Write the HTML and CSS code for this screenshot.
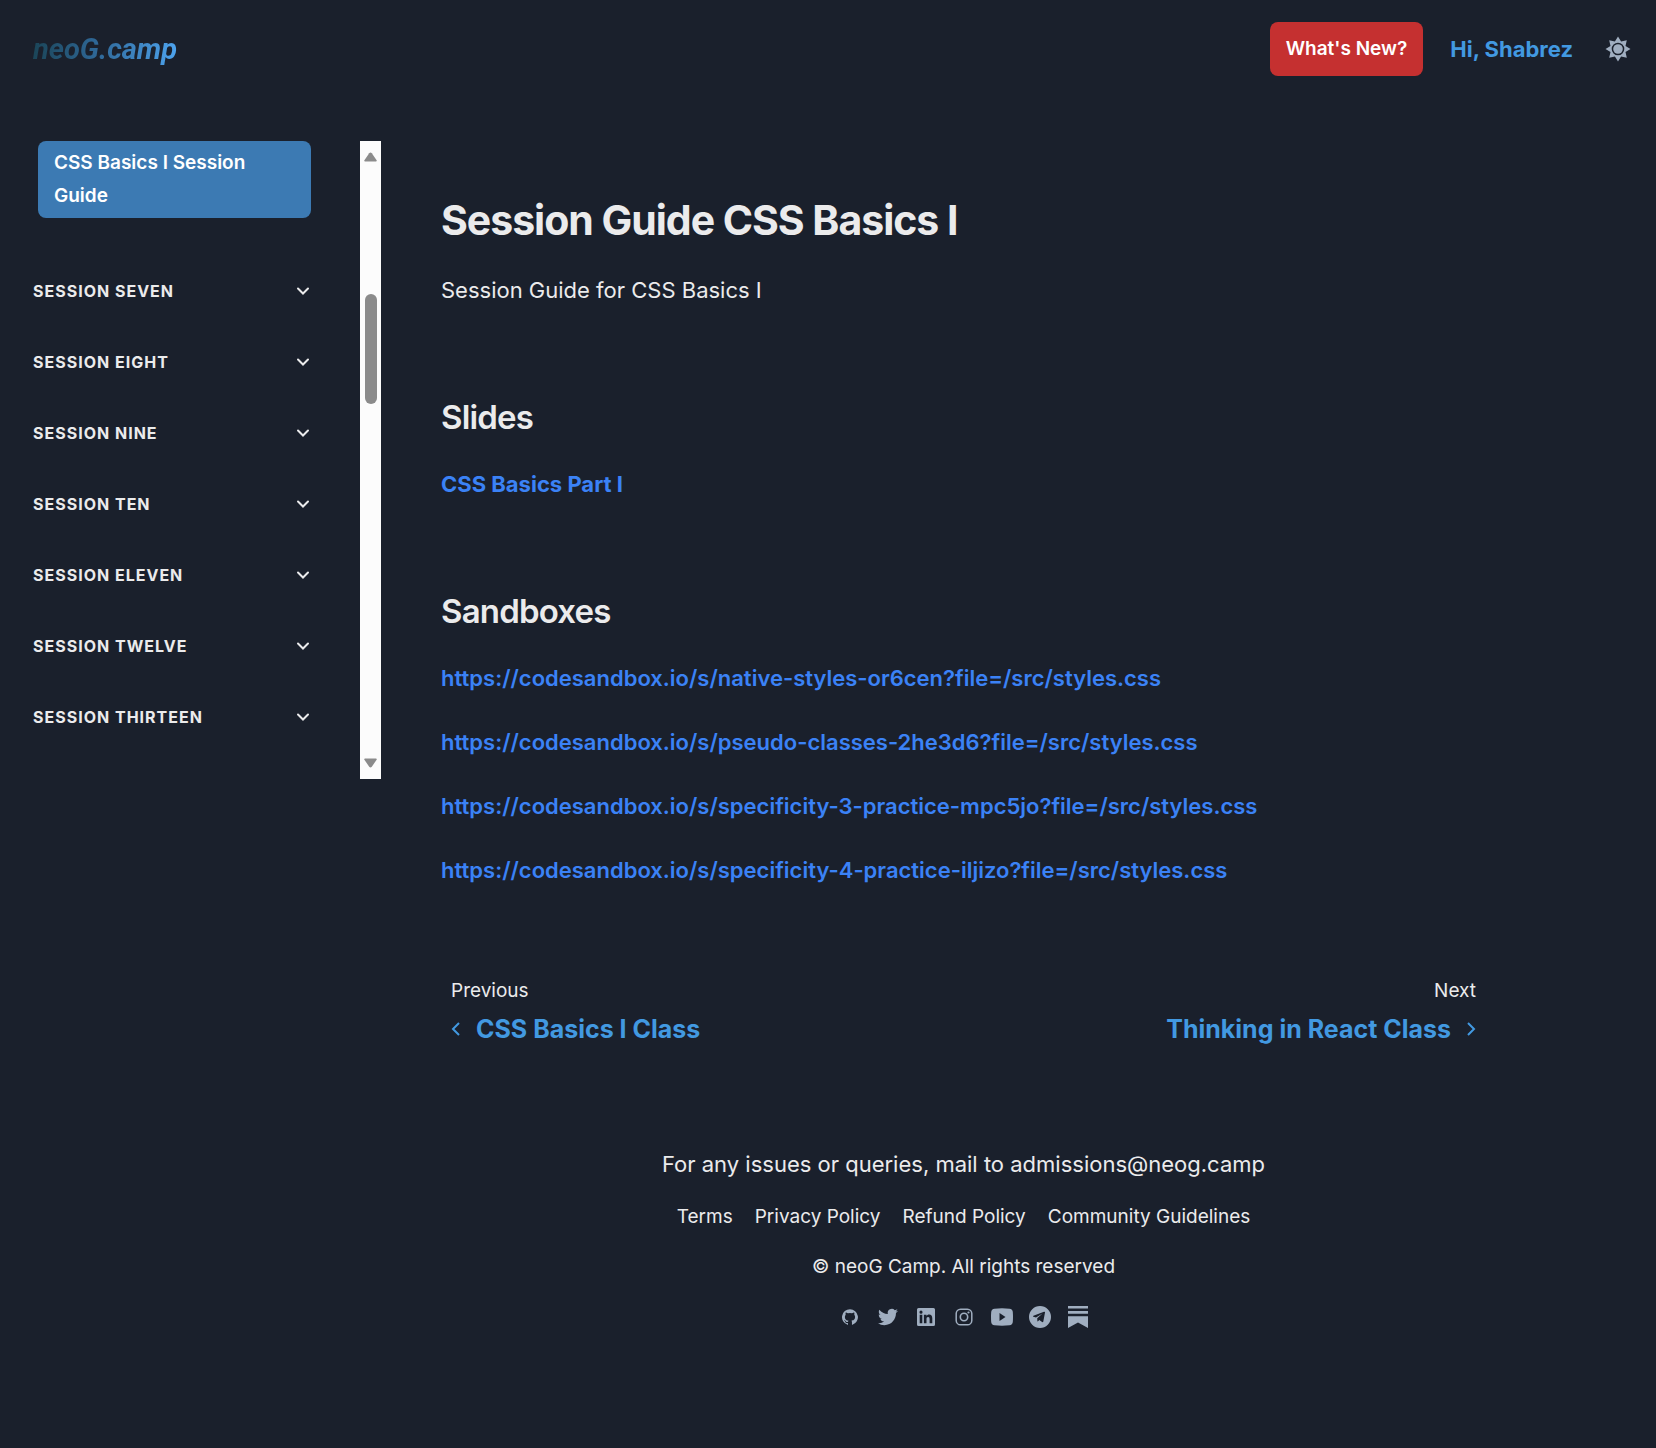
FILE: index.html
```html
<!DOCTYPE html>
<html lang="en">
<head>
<meta charset="utf-8">
<meta name="viewport" content="width=device-width, initial-scale=1">
<title>Session Guide CSS Basics I | neoG Camp</title>
<link rel="stylesheet" href="styles.css">
</head>
<body>
<header class="topbar">
  <a class="logo" href="#">neoG.camp</a>
  <div class="topbar-actions">
    <button class="whats-new" type="button">What's New?</button>
    <a class="greeting" href="#">Hi, Shabrez</a>
    <button class="theme-toggle" type="button" aria-label="Toggle theme">
      <svg viewBox="0 0 26 26" width="26" height="26" aria-hidden="true">
        <path fill-rule="evenodd" d="M13 .5l3.100 5 5.700-1.300-1.300 5.700 5 3.100-5 3.100 1.300 5.700-5.700-1.300-3.100 5-3.100-5-5.700 1.300 1.300-5.700L.5 13l5-3.100-1.300-5.700 5.700 1.300zM13 6.700a6.300 6.300 0 1 0 0 12.600 6.300 6.300 0 0 0 0-12.600z"/>
        <circle cx="13" cy="13" r="4.800"/>
      </svg>
    </button>
  </div>
</header>

<div class="layout">
  <div class="sidebar">
    <nav class="sessions" aria-label="Sessions">
      <a class="active-page" href="#" aria-current="page">CSS Basics I Session Guide</a>
      <ul class="session-list">
        <li><button class="session" type="button">Session Seven<svg class="chevron" viewBox="0 0 16 16" aria-hidden="true"><path d="M3 5.500l5 5 5-5"/></svg></button></li>
        <li><button class="session" type="button">Session Eight<svg class="chevron" viewBox="0 0 16 16" aria-hidden="true"><path d="M3 5.500l5 5 5-5"/></svg></button></li>
        <li><button class="session" type="button">Session Nine<svg class="chevron" viewBox="0 0 16 16" aria-hidden="true"><path d="M3 5.500l5 5 5-5"/></svg></button></li>
        <li><button class="session" type="button">Session Ten<svg class="chevron" viewBox="0 0 16 16" aria-hidden="true"><path d="M3 5.500l5 5 5-5"/></svg></button></li>
        <li><button class="session" type="button">Session Eleven<svg class="chevron" viewBox="0 0 16 16" aria-hidden="true"><path d="M3 5.500l5 5 5-5"/></svg></button></li>
        <li><button class="session" type="button">Session Twelve<svg class="chevron" viewBox="0 0 16 16" aria-hidden="true"><path d="M3 5.500l5 5 5-5"/></svg></button></li>
        <li><button class="session" type="button">Session Thirteen<svg class="chevron" viewBox="0 0 16 16" aria-hidden="true"><path d="M3 5.500l5 5 5-5"/></svg></button></li>
      </ul>
    </nav>
    <div class="scrollbar" aria-hidden="true">
      <svg viewBox="0 0 13 10" width="13" height="10"><path d="M5.200 1.200q1.300-1.600 2.600 0l4.800 7q.6 1.300-.8 1.300H1.200q-1.400 0-.8-1.300z"/></svg>
      <div class="track"><div class="thumb"></div></div>
      <svg viewBox="0 0 13 10" width="13" height="10"><path d="M5.200 8.800q1.300 1.600 2.600 0l4.800-7q.6-1.300-.8-1.300H1.200q-1.400 0-.8 1.300z"/></svg>
    </div>
  </div>

  <div class="content">
    <main>
      <h1>Session Guide CSS Basics I</h1>
      <p class="lead">Session Guide for CSS Basics I</p>

      <h2>Slides</h2>
      <ul class="links">
        <li><a class="strong" href="#">CSS Basics Part I</a></li>
      </ul>

      <h2>Sandboxes</h2>
      <ul class="links">
        <li><a href="#">https://codesandbox.io/s/native-styles-or6cen?file=/src/styles.css</a></li>
        <li><a href="#">https://codesandbox.io/s/pseudo-classes-2he3d6?file=/src/styles.css</a></li>
        <li><a href="#">https://codesandbox.io/s/specificity-3-practice-mpc5jo?file=/src/styles.css</a></li>
        <li><a href="#">https://codesandbox.io/s/specificity-4-practice-iljizo?file=/src/styles.css</a></li>
      </ul>
    </main>

    <nav class="pager" aria-label="Pages">
      <a class="pager-link" href="#">
        <span class="pager-label">Previous</span>
        <span class="pager-title"><svg class="arrow" viewBox="0 0 9 16" aria-hidden="true"><path d="M8 2L2 8l6 6"/></svg>CSS Basics I Class</span>
      </a>
      <a class="pager-link next" href="#">
        <span class="pager-label">Next</span>
        <span class="pager-title">Thinking in React Class<svg class="arrow" viewBox="0 0 9 16" aria-hidden="true"><path d="M1 2l6 6-6 6"/></svg></span>
      </a>
    </nav>

    <footer class="footer">
      <p class="contact">For any issues or queries, mail to admissions@neog.camp</p>
      <ul class="policies">
        <li><a href="#">Terms</a></li>
        <li><a href="#">Privacy Policy</a></li>
        <li><a href="#">Refund Policy</a></li>
        <li><a href="#">Community Guidelines</a></li>
      </ul>
      <p class="copyright">© neoG Camp. All rights reserved</p>
      <ul class="social">
        <li><a href="#" aria-label="GitHub"><svg viewBox="0 0 24 24" width="16" height="16"><path d="M12 .3a12 12 0 0 0-3.800 23.380c.6.120.83-.26.83-.57L9 21.070c-3.340.72-4.040-1.610-4.040-1.610-.55-1.390-1.340-1.760-1.340-1.760-1.080-.74.090-.73.090-.73 1.200.09 1.830 1.240 1.830 1.240 1.080 1.830 2.810 1.300 3.500 1 .1-.78.420-1.310.760-1.610-2.670-.3-5.470-1.330-5.470-5.930 0-1.310.470-2.380 1.240-3.220-.14-.3-.54-1.520.1-3.180 0 0 1-.32 3.300 1.230a11.500 11.500 0 0 1 6 0c2.280-1.550 3.290-1.230 3.290-1.230.64 1.660.240 2.880.120 3.180a4.650 4.650 0 0 1 1.230 3.220c0 4.610-2.800 5.630-5.480 5.920.42.36.81 1.100.81 2.220l-.01 3.290c0 .31.2.69.820.57A12 12 0 0 0 12 .3"/></svg></a></li>
        <li><a href="#" aria-label="Twitter"><svg viewBox="0 0 24 24" width="20" height="20"><path d="M23.950 4.570a10 10 0 0 1-2.820.77 4.960 4.960 0 0 0 2.160-2.720c-.95.55-2 .95-3.130 1.180a4.920 4.920 0 0 0-8.380 4.480C7.690 8.100 4.070 6.130 1.640 3.160a4.820 4.820 0 0 0-.67 2.480c0 1.710.87 3.210 2.190 4.100a4.900 4.900 0 0 1-2.230-.62v.06a4.920 4.920 0 0 0 3.950 4.830 5 5 0 0 1-2.210.09 4.940 4.940 0 0 0 4.600 3.420A9.870 9.870 0 0 1 0 19.540a13.990 13.990 0 0 0 7.550 2.210c9.050 0 14-7.500 14-13.980 0-.21 0-.42-.02-.63a9.940 9.940 0 0 0 2.460-2.550z"/></svg></a></li>
        <li><a href="#" aria-label="LinkedIn"><svg viewBox="0 0 18 18" width="18" height="18"><path fill-rule="evenodd" d="M1.500 0h15Q18 0 18 1.500v15q0 1.500-1.500 1.500h-15Q0 18 0 16.500v-15Q0 0 1.500 0zM2.700 6.800v8.500h2.600V6.800zM4 2.600a1.500 1.500 0 1 0 0 3.100 1.500 1.500 0 0 0 0-3.100zM6.900 6.800v8.500h2.600v-4.200c0-1.200.4-2 1.600-2 1.100 0 1.500.8 1.500 2v4.200h2.700v-4.700c0-2.700-1-4-3.100-4-1.400 0-2.200.7-2.700 1.400V6.800z"/></svg></a></li>
        <li><a href="#" aria-label="Instagram"><svg viewBox="0 0 18 18" width="18" height="18"><rect x="1.200" y="1.200" width="15.600" height="15.600" rx="4.400" fill="none" stroke="currentColor" stroke-width="1.500"/><circle cx="9" cy="9" r="3.700" fill="none" stroke="currentColor" stroke-width="1.600"/><circle cx="13.500" cy="4.500" r="1.100"/></svg></a></li>
        <li><a href="#" aria-label="YouTube"><svg viewBox="0 0 22 18" width="22" height="18"><path fill-rule="evenodd" d="M3.500.700Q11 0 18.500.700 21.600 1 21.800 4q.4 5 0 10-.3 3-3.300 3.300-7.500.7-15 0Q.4 17 .2 14q-.4-5 0-10Q.5 1 3.500.700zM8.500 5v8l6-4z"/></svg></a></li>
        <li><a href="#" aria-label="Telegram"><svg viewBox="0 0 22 22" width="22" height="22"><path fill-rule="evenodd" d="M11 0a11 11 0 1 0 0 22 11 11 0 0 0 0-22zM16 6.500L14.300 15.500q-.3 1-1.200.5L10.300 14 9 15.300q-.5.500-.6-.3l-.2-2.800L13.500 7.500 7 11.500 4.400 10.700q-.9-.4 0-.9L15 5.700q1.200-.3 1 .8z"/></svg></a></li>
        <li><a href="#" aria-label="Substack"><svg viewBox="0 0 20 22" width="20" height="22"><path d="M0 0h20v2.600H0zM0 5.100h20v2.600H0zM0 10.300h20V22l-10-5.600L0 22z"/></svg></a></li>
      </ul>
    </footer>
  </div>
</div>
</body>
</html>
```
FILE: styles.css
```css
:root {
  --bg: #1a202c;
  --text: #ebebec;
  --muted: #a0aec0;
  --accent: #4299e1;
  --link: #3b82f6;
}

* { box-sizing: border-box; }

body {
  margin: 0;
  background: var(--bg);
  color: var(--text);
  font-family: Inter, "Liberation Sans", sans-serif;
  font-size: 22px;
  line-height: 36px;
}

h1, h2, p, ul { margin: 0; padding: 0; }
ul { list-style: none; }
a { color: inherit; text-decoration: none; }
button {
  border: 0;
  padding: 0;
  background: none;
  color: inherit;
  font: inherit;
  cursor: pointer;
}
svg { display: block; fill: currentColor; }

/* Top bar */
.topbar {
  display: flex;
  align-items: center;
  justify-content: space-between;
  padding: 22px 25px 22px 33px;
}
.logo {
  font-family: Roboto, "Liberation Sans", sans-serif;
  font-size: 29px;
  font-style: italic;
  font-weight: 700;
  background: linear-gradient(90deg, #1b4558, #2f6898 45%, #4da3ee);
  background-clip: text;
  -webkit-background-clip: text;
  color: transparent;
}
.topbar-actions { display: flex; align-items: center; }
.whats-new {
  padding: 12px 16px;
  border-radius: 8px;
  background: #c53030;
  color: #fff;
  font-size: 19px;
  font-weight: 600;
  line-height: 30px;
}
.greeting {
  margin: 0 32px 0 27px;
  color: var(--accent);
  font-weight: 700;
}
.theme-toggle { color: var(--muted); }

/* Sidebar */
.layout {
  display: grid;
  grid-template-columns: 381px minmax(0, 1fr);
  align-items: start;
}
.sidebar {
  display: flex;
  justify-content: space-between;
  margin-top: 43px;
}
.sessions { width: 311px; padding-left: 33px; }
.active-page {
  display: block;
  margin-left: 5px;
  padding: 5px 16px 6px;
  border-radius: 8px;
  background: #3c7ab3;
  color: #fff;
  font-size: 19px;
  font-weight: 600;
  line-height: 33px;
}
.session-list { padding: 37px 0 27px; }
.session {
  display: flex;
  align-items: center;
  justify-content: space-between;
  width: 100%;
  height: 71px;
  font-size: 16px;
  font-weight: 700;
  letter-spacing: 1px;
  text-transform: uppercase;
}
.chevron {
  width: 16px;
  height: 16px;
  fill: none;
  stroke: currentColor;
  stroke-width: 2;
  stroke-linecap: round;
}
.scrollbar {
  display: flex;
  flex-direction: column;
  align-items: center;
  width: 21px;
  padding: 11px 0;
  background: #fcfcfc;
  color: #8b8b8b;
}
.track { flex: 1; padding-top: 132px; }
.thumb {
  width: 12px;
  height: 110px;
  border-radius: 6px;
  background: currentColor;
}

/* Content */
.content { padding: 96px 170px 117px 60px; }
h1 {
  font-size: 41px;
  font-weight: 700;
  line-height: 52px;
  letter-spacing: -0.025em;
}
h2 {
  margin-top: 87px;
  font-size: 33px;
  font-weight: 600;
  line-height: 44px;
  letter-spacing: -0.025em;
}
.lead { margin-top: 26px; }
.links {
  display: grid;
  gap: 28px;
  margin-top: 27px;
  color: var(--link);
  font-weight: 600;
}
.strong { font-weight: 700; }

/* Previous and next page */
.pager {
  display: flex;
  justify-content: space-between;
  margin-top: 88px;
  padding: 0 10px;
}
.pager-link { display: grid; gap: 5px; }
.next { justify-items: end; }
.pager-label { font-size: 19px; line-height: 30px; }
.pager-title {
  display: flex;
  align-items: center;
  gap: 16px;
  color: var(--accent);
  font-size: 25px;
  font-weight: 700;
}
.arrow {
  width: 9px;
  height: 16px;
  fill: none;
  stroke: currentColor;
  stroke-width: 2;
}

/* Footer */
.footer {
  display: flex;
  flex-direction: column;
  align-items: center;
  gap: 20px;
  margin-top: 99px;
  font-size: 19px;
  line-height: 30px;
}
.contact { font-size: 22px; line-height: 36px; }
.policies { display: flex; gap: 22px; }
.social { display: flex; gap: 16px; color: var(--muted); }
.social a {
  display: grid;
  place-items: center;
  width: 22px;
  height: 30px;
}
```
